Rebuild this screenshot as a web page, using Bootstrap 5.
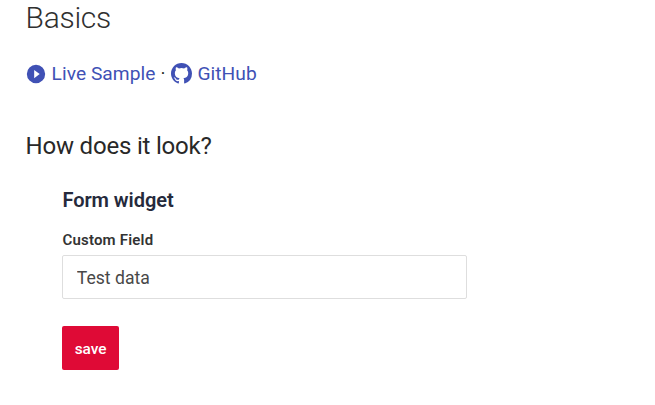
<!DOCTYPE html>
<html lang="en">
<head>
<meta charset="utf-8">
<title>Basics</title>
<link href="https://cdn.jsdelivr.net/npm/bootstrap@5.3.0/dist/css/bootstrap.min.css" rel="stylesheet">
<style>
body{font-family:Roboto,"Liberation Sans",sans-serif;color:rgba(0,0,0,.87);background:#fff;overflow:hidden}
.doc{padding:0 0 0 25.6px}
.doc-title{font-size:30px;font-weight:300;line-height:40px;letter-spacing:-.01em;color:#303030;margin-top:-2px}
.links{font-size:19.2px;line-height:28px;margin-top:21px}
.links a{color:#4051b5}
.links a span{padding-top:1px;letter-spacing:.04px}
.links svg{fill:#4051b5}
.play-icon{margin-left:-1px;margin-right:5px}
.hub-icon{margin-right:5px}
.dot{margin:0 6px 0 5px}
.section-title{font-size:24px;font-weight:400;line-height:34px;letter-spacing:-.2px;margin-top:41px;color:#282828}
.widget{margin:24px 0 0 36.8px;width:404.4px}
.widget-title{font-size:20px;font-weight:600;line-height:26px;letter-spacing:-.04px;color:#252a3c}
.widget-label{font-size:15px;font-weight:600;line-height:20px;letter-spacing:.2px;margin-top:17px;color:#333}
.widget-input{height:44px;margin-top:5px;border:1px solid #dedede;border-radius:2px;font-size:17.6px;color:#484848;padding:2px 13.4px 0}
.widget-save{width:56.4px;height:44px;margin-top:27px;border-radius:2px;background:#df0a36;color:#fff;font-size:15.4px;font-weight:500;border:0;padding-top:1px;line-height:20px}
</style>
</head>
<body>
<main class="doc">
<h1 class="doc-title mb-0">Basics</h1>
<div class="links d-flex align-items-center">
<a href="#" class="text-decoration-none d-flex align-items-center"><svg class="play-icon" width="22" height="22" viewBox="0 0 24 24"><path d="M12 2a10 10 0 1 0 0 20 10 10 0 0 0 0-20zm-2 14.5v-9l6 4.5z"/></svg><span>Live Sample</span></a>
<span class="dot">·</span>
<a href="#" class="text-decoration-none d-flex align-items-center"><svg class="hub-icon" width="21" height="21" viewBox="0 0 16 16"><path d="M8 0C3.58 0 0 3.58 0 8c0 3.54 2.29 6.53 5.47 7.59.4.07.55-.17.55-.38 0-.19-.01-.82-.01-1.49-2.01.37-2.53-.49-2.69-.94-.09-.23-.48-.94-.82-1.13-.28-.15-.68-.52-.01-.53.63-.01 1.08.58 1.23.82.72 1.21 1.87.87 2.33.66.07-.52.28-.87.51-1.07-1.78-.2-3.64-.89-3.64-3.95 0-.87.31-1.59.82-2.15-.08-.2-.36-1.02.08-2.12 0 0 .67-.21 2.2.82a7.6 7.6 0 0 1 4 0c1.53-1.04 2.2-.82 2.2-.82.44 1.1.16 1.92.08 2.12.51.56.82 1.27.82 2.15 0 3.07-1.87 3.75-3.65 3.95.29.25.54.73.54 1.48 0 1.07-.01 1.93-.01 2.2 0 .21.15.46.55.38A8 8 0 0 0 16 8c0-4.42-3.58-8-8-8z"/></svg><span>GitHub</span></a>
</div>
<h2 class="section-title mb-0">How does it look?</h2>
<form class="widget">
<h3 class="widget-title mb-0">Form widget</h3>
<label class="widget-label d-block" for="field">Custom Field</label>
<input class="widget-input form-control" id="field" value="Test data">
<button type="button" class="widget-save btn px-0 pb-0">save</button>
</form>
</main>
<script src="https://cdn.jsdelivr.net/npm/bootstrap@5.3.0/dist/js/bootstrap.bundle.min.js"></script>
</body>
</html>
